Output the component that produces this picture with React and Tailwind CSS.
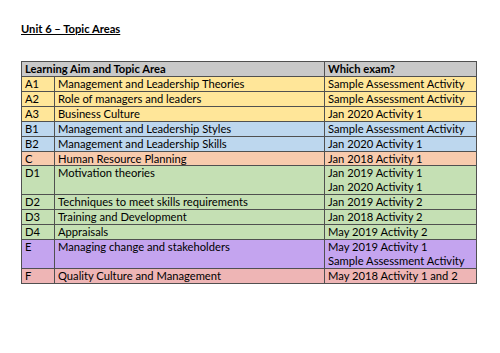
import React from 'react';

const rows = [
  { code: 'A1', topic: 'Management and Leadership Theories', exams: ['Sample Assessment Activity'], bg: 'bg-[#ffe699]' },
  { code: 'A2', topic: 'Role of managers and leaders', exams: ['Sample Assessment Activity'], bg: 'bg-[#ffe699]' },
  { code: 'A3', topic: 'Business Culture', exams: ['Jan 2020 Activity 1'], bg: 'bg-[#ffe699]' },
  { code: 'B1', topic: 'Management and Leadership Styles', exams: ['Sample Assessment Activity'], bg: 'bg-[#bdd7ee]' },
  { code: 'B2', topic: 'Management and Leadership Skills', exams: ['Jan 2020 Activity 1'], bg: 'bg-[#bdd7ee]' },
  { code: 'C', topic: 'Human Resource Planning', exams: ['Jan 2018 Activity 1'], bg: 'bg-[#f8cbad]' },
  { code: 'D1', topic: 'Motivation theories', exams: ['Jan 2019 Activity 1', 'Jan 2020 Activity 1'], bg: 'bg-[#c5e0b4]' },
  { code: 'D2', topic: 'Techniques to meet skills requirements', exams: ['Jan 2019 Activity 2'], bg: 'bg-[#c5e0b4]' },
  { code: 'D3', topic: 'Training and Development', exams: ['Jan 2018 Activity 2'], bg: 'bg-[#c5e0b4]' },
  { code: 'D4', topic: 'Appraisals', exams: ['May 2019 Activity 2'], bg: 'bg-[#c5e0b4]' },
  { code: 'E', topic: 'Managing change and stakeholders', exams: ['May 2019 Activity 1', 'Sample Assessment Activity'], bg: 'bg-[#c4a4ef]' },
  { code: 'F', topic: 'Quality Culture and Management', exams: ['May 2018 Activity 1 and 2'], bg: 'bg-[#eeb5b5]' },
];

const cell = 'border border-[#505050] px-[3px] py-0 align-top text-left whitespace-nowrap overflow-hidden';

export default function App() {
  return (
    <div className="w-[500px] h-[353px] bg-white text-black font-['Lato','Liberation_Sans',sans-serif] text-[11.2px] leading-[13.5px]">
      <div className="pl-[21px] pt-[21px]">
        <h1 className="font-bold underline text-[11.2px] leading-[16px]">Unit 6 – Topic Areas</h1>
      </div>
      <div className="pl-[21px] pt-[24px]">
        <table className="border-collapse w-[455px] table-fixed">
          <colgroup>
            <col className="w-[33px]" />
            <col className="w-[270px]" />
            <col className="w-[152px]" />
          </colgroup>
          <thead>
            <tr className="bg-[#c9c9c9] font-bold">
              <th colSpan={2} className={`${cell} leading-[14px]`}>Learning Aim and Topic Area</th>
              <th className={`${cell} leading-[14px]`}>Which exam?</th>
            </tr>
          </thead>
          <tbody>
            {rows.map((row) => (
              <tr key={row.code} className={row.bg}>
                <td className={cell}>{row.code}</td>
                <td className={cell}>{row.topic}</td>
                <td className={cell}>
                  {row.exams.map((exam) => (
                    <div key={exam} className="leading-[13.9px]">{exam}</div>
                  ))}
                </td>
              </tr>
            ))}
          </tbody>
        </table>
      </div>
    </div>
  );
}
